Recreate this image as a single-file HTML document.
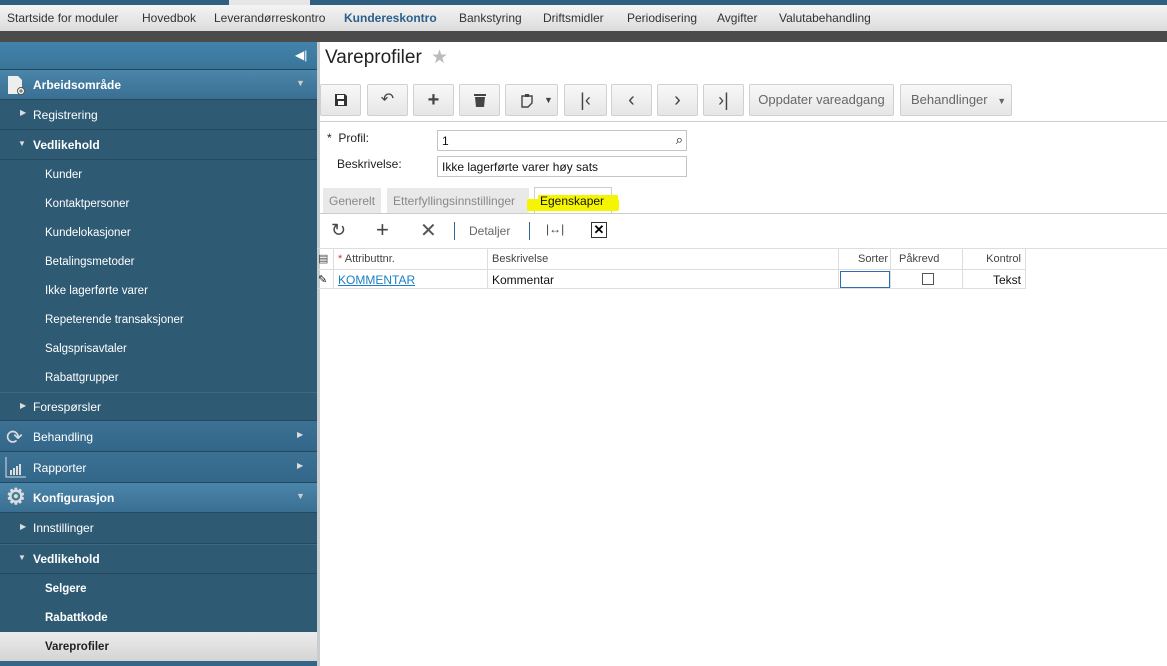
<!DOCTYPE html>
<html><head><meta charset="utf-8"><style>
*{box-sizing:border-box;margin:0;padding:0}
body{width:1167px;height:666px;overflow:hidden;background:#fff;font-family:"Liberation Sans",sans-serif;position:relative}
.top{position:absolute;left:0;top:0;width:1167px;height:5px;background:#2f5f80}
.top .t{position:absolute;left:229px;width:81px;height:5px;background:#e6e6e6}
.menu{position:absolute;top:5px;left:0;width:1167px;height:26px;background:linear-gradient(#f4f4f4,#dcdcdc);font-size:12px;color:#333}
.menu span{position:absolute;top:6px}
.dark{position:absolute;top:31px;left:0;width:1167px;height:11px;background:#4b4b4b}
.side{position:absolute;top:42px;left:0;width:317px;height:624px;background:#2e5a74}
.sb{position:absolute;left:317px;top:42px;width:3px;height:624px;background:#c9cdd0}
.row{position:absolute;left:0;width:317px;color:#fff;font-size:12px;border-bottom:1px solid #24485e}
.hdr{background:linear-gradient(#4a85aa,#3a6f92);font-weight:bold}
.sec{background:linear-gradient(#3c7194,#33678a)}
.row span{position:absolute}
.sel{background:linear-gradient(#ececec,#d4d4d4);color:#222;font-weight:bold}
.btn{position:absolute;top:84px;height:32px;background:linear-gradient(#f8f8f8,#e6e6e6);border:1px solid #d0d0d0;border-radius:2px;color:#444;font-size:13px;text-align:center;line-height:30px}
.inp{position:absolute;height:21px;border:1px solid #c4c4c4;font-size:12px;padding:3px 4px;color:#111}
.lbl{position:absolute;font-size:12px;color:#222}
.tab{position:absolute;top:188px;height:25px;background:#e9e9e9;font-size:12px;color:#888;line-height:26px;padding:0 6px}
.th{position:absolute;top:249px;height:20px;font-size:11px;color:#444;line-height:20px;border-right:1px solid #ddd}
.td{position:absolute;top:269px;height:20px;font-size:12px;color:#111;line-height:20px;border-right:1px solid #ddd;border-top:1px solid #ddd;border-bottom:1px solid #ddd}
</style></head><body>
<div class="top"><div class="t"></div></div>
<div class="menu">
<span style="left:7px">Startside for moduler</span><span style="left:142px">Hovedbok</span><span style="left:214px">Leverandørreskontro</span><span style="left:344px;font-weight:bold;color:#2a5f8c">Kundereskontro</span><span style="left:459px">Bankstyring</span><span style="left:543px">Driftsmidler</span><span style="left:627px">Periodisering</span><span style="left:717px">Avgifter</span><span style="left:779px">Valutabehandling</span>
</div>
<div class="dark"></div>
<div class="side">
<div class="row" style="top:0;height:28px;background:linear-gradient(#4283ab,#3a7599)"><span style="left:295px;top:6px;font-size:12px">◀|</span></div>
<div class="row hdr" style="top:28px;height:30px"><svg style="position:absolute;left:7px;top:5px" width="18" height="20"><path d="M1 1h10l4 4v14H1z" fill="#eee"/><circle cx="14" cy="16" r="3.5" fill="#fff" stroke="#555"/><path d="M12 16h4M14 14v4" stroke="#555"/></svg><span style="left:33px;top:8px">Arbeidsområde</span><span style="left:296px;top:8px;font-size:9px;color:#ccc">▼</span></div>
<div class="row" style="top:58px;height:30px"><span style="left:20px;top:8px;font-size:8px;color:#ddd">▶</span><span style="left:33px;top:8px">Registrering</span></div>
<div class="row" style="top:88px;height:30px;font-weight:bold"><span style="left:18px;top:9px;font-size:8px;color:#ddd">▼</span><span style="left:33px;top:8px">Vedlikehold</span></div>
<div style="position:absolute;top:118px;left:0;width:317px;color:#fff;font-size:11.5px">
<div style="position:absolute;left:45px;top:9px">Kunder</div>
<div style="position:absolute;left:45px;top:38px">Kontaktpersoner</div>
<div style="position:absolute;left:45px;top:67px">Kundelokasjoner</div>
<div style="position:absolute;left:45px;top:96px">Betalingsmetoder</div>
<div style="position:absolute;left:45px;top:125px">Ikke lagerførte varer</div>
<div style="position:absolute;left:45px;top:154px">Repeterende transaksjoner</div>
<div style="position:absolute;left:45px;top:183px">Salgsprisavtaler</div>
<div style="position:absolute;left:45px;top:212px">Rabattgrupper</div>
</div>
<div class="row" style="top:350px;height:29px;border-top:1px solid #3c6a86"><span style="left:20px;top:8px;font-size:8px;color:#ddd">▶</span><span style="left:33px;top:7px">Forespørsler</span></div>
<div class="row sec" style="top:379px;height:31px"><span style="left:6px;top:4px;font-size:20px;color:#ddd">⟳</span><span style="left:33px;top:9px">Behandling</span><span style="left:297px;top:9px;font-size:8px;color:#ddd">▶</span></div>
<div class="row sec" style="top:410px;height:31px"><svg style="position:absolute;left:5px;top:5px" width="22" height="22"><path d="M1 0v20h20" stroke="#ddd" fill="none"/><path d="M6 18v-5M9 18v-7M12 18v-9M15 18v-11" stroke="#ddd" stroke-width="2"/></svg><span style="left:33px;top:9px">Rapporter</span><span style="left:297px;top:9px;font-size:8px;color:#ddd">▶</span></div>
<div class="row hdr" style="top:441px;height:30px"><span style="left:6px;top:1px;font-size:22px;color:#ddd">⚙</span><span style="left:33px;top:8px">Konfigurasjon</span><span style="left:296px;top:8px;font-size:9px;color:#ccc">▼</span></div>
<div class="row" style="top:471px;height:31px"><span style="left:20px;top:9px;font-size:8px;color:#ddd">▶</span><span style="left:33px;top:8px">Innstillinger</span></div>
<div class="row" style="top:502px;height:30px;font-weight:bold;border-top:1px solid #3c6a86"><span style="left:18px;top:8px;font-size:8px;color:#ddd">▼</span><span style="left:33px;top:7px">Vedlikehold</span></div>
<div style="position:absolute;left:45px;top:541px;color:#fff;font-size:11.5px;font-weight:bold">Selgere</div>
<div style="position:absolute;left:45px;top:570px;color:#fff;font-size:11.5px;font-weight:bold">Rabattkode</div>
<div class="row sel" style="top:590px;height:29px;border:none"><span style="left:45px;top:9px;font-size:11.5px">Vareprofiler</span></div>
<div style="position:absolute;top:619px;left:0;width:317px;height:5px;background:#33678a"></div>
</div>
<div class="sb"></div>
<div style="position:absolute;left:325px;top:47px;font-size:19px;color:#222">Vareprofiler</div>
<div style="position:absolute;left:431px;top:46px;font-size:19px;color:#bbb">★</div>
<div class="btn" style="left:320px;width:41px"><svg width="14" height="14" style="margin-top:8px"><path d="M1 1h10l2 2v10H1z" fill="#333"/><rect x="3" y="2" width="7" height="4" fill="#fff"/><rect x="4" y="8" width="6" height="4" fill="#fff"/></svg></div>
<div class="btn" style="left:367px;width:41px;font-size:16px">↶</div>
<div class="btn" style="left:413px;width:41px;font-size:20px;font-weight:bold">+</div>
<div class="btn" style="left:459px;width:41px"><svg width="12" height="14" style="margin-top:8px"><rect x="0" y="1" width="12" height="2" fill="#444"/><path d="M1 4h10l-1 10H2z" fill="#444"/></svg></div>
<div class="btn" style="left:505px;width:53px"><svg width="12" height="15" style="margin:8px 10px 0 0"><path d="M1 3h10v7l-4 4H1z" fill="none" stroke="#444" stroke-width="1.4"/><rect x="4" y="1" width="4" height="3" fill="#444"/></svg><span style="font-size:9px;position:absolute;left:38px;top:0">▼</span></div>
<div class="btn" style="left:564px;width:43px;font-size:18px">|‹</div>
<div class="btn" style="left:611px;width:41px;font-size:20px">‹</div>
<div class="btn" style="left:657px;width:41px;font-size:20px">›</div>
<div class="btn" style="left:703px;width:41px;font-size:18px">›|</div>
<div class="btn" style="left:749px;width:145px;color:#666">Oppdater vareadgang</div>
<div class="btn" style="left:900px;width:112px;color:#666;text-align:left;padding-left:10px">Behandlinger <span style="font-size:9px;margin-left:6px">▼</span></div>
<div style="position:absolute;left:317px;top:121px;width:850px;height:1px;background:#ccc"></div>
<div class="lbl" style="left:327px;top:131px">* &nbsp;Profil:</div>
<div class="inp" style="left:437px;top:130px;width:250px">1<span style="position:absolute;right:3px;top:1px;font-size:13px">⌕</span></div>
<div class="lbl" style="left:337px;top:157px">Beskrivelse:</div>
<div class="inp" style="left:437px;top:156px;width:250px">Ikke lagerførte varer høy sats</div>
<div class="tab" style="left:323px">Generelt</div>
<div class="tab" style="left:387px;width:142px">Etterfyllingsinnstillinger</div>
<div class="tab" style="left:534px;width:78px;background:#fff;color:#111;border:1px solid #ccc;border-bottom:none;height:26px;top:187px"></div>
<div style="position:absolute;left:527px;top:199px;width:92px;height:12px;background:#f5f500;border-radius:2px"></div>
<div style="position:absolute;left:538px;top:195px;width:80px;height:6px;background:#f5f500"></div>
<div style="position:absolute;left:540px;top:194px;font-size:12px;color:#111">Egenskaper</div>
<div style="position:absolute;left:317px;top:213px;width:850px;height:1px;background:#ccc"></div>
<div style="position:absolute;left:331px;top:220px;font-size:18px;color:#444">↻</div>
<div style="position:absolute;left:376px;top:217px;font-size:22px;color:#444">+</div>
<div style="position:absolute;left:420px;top:218px;font-size:20px;color:#555">✕</div>
<div style="position:absolute;left:454px;top:222px;width:1px;height:18px;background:#2f6a99"></div>
<div style="position:absolute;left:469px;top:224px;font-size:12px;color:#666">Detaljer</div>
<div style="position:absolute;left:529px;top:222px;width:1px;height:18px;background:#2f6a99"></div>
<div style="position:absolute;left:546px;top:222px;font-size:12px;color:#444">|↔|</div>
<div style="position:absolute;left:591px;top:222px;width:16px;height:16px;border:1.5px solid #333;font-size:13px;line-height:13px;text-align:center;font-weight:bold">✕</div>
<div style="position:absolute;left:317px;top:248px;width:850px;height:1px;background:#ddd"></div>
<div class="th" style="left:318px;width:16px;font-size:11px">▤</div>
<div class="th" style="left:334px;width:154px;padding-left:4px"><span style="color:#d33">*</span> Attributtnr.</div>
<div class="th" style="left:488px;width:351px;padding-left:4px">Beskrivelse</div>
<div class="th" style="left:839px;width:52px;text-align:right;padding-right:2px">Sorter</div>
<div class="th" style="left:891px;width:72px;padding-left:8px">Påkrevd</div>
<div class="th" style="left:963px;width:63px;text-align:right;padding-right:4px">Kontrol</div>
<div class="td" style="left:318px;width:16px;font-size:11px">✎</div>
<div class="td" style="left:334px;width:154px;padding-left:4px;color:#1a7fc6;text-decoration:underline">KOMMENTAR</div>
<div class="td" style="left:488px;width:351px;padding-left:4px">Kommentar</div>
<div class="td" style="left:839px;width:52px"><div style="margin:1px;height:17px;width:50px;border:1px solid #2a6eb0"></div></div>
<div class="td" style="left:891px;width:72px"><div style="margin:3px 0 0 31px;width:12px;height:12px;border:1px solid #555"></div></div>
<div class="td" style="left:963px;width:63px;text-align:right;padding-right:4px">Tekst</div>
</body></html>
